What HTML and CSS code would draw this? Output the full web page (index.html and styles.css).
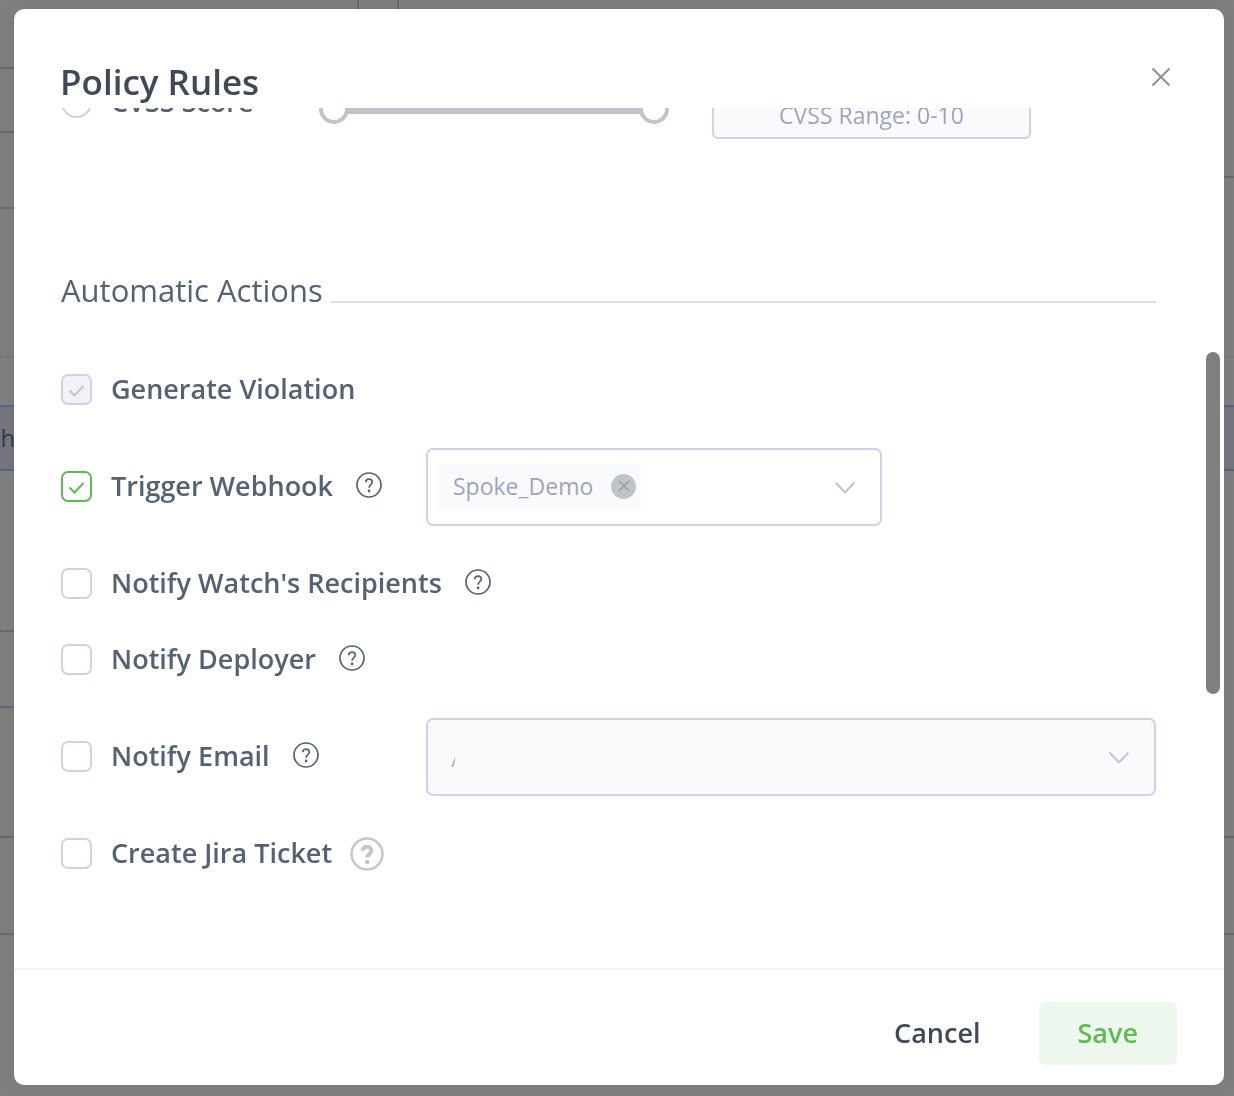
FILE: index.html
```
<!DOCTYPE html>
<html lang="en">
<head>
<meta charset="utf-8">
<meta name="viewport" content="width=device-width, initial-scale=1">
<title>Policy Rules</title>
<link rel="stylesheet" href="styles.css">
</head>
<body>
<svg class="sprite" aria-hidden="true">
  <symbol id="check" viewBox="0 0 31 31"><path d="M8.500 16.500 13.500 21.500 22.500 12"/></symbol>
  <symbol id="help" viewBox="0 0 26 26"><circle cx="13" cy="13" r="12"/><path d="M9.700 10.200C9.800 8.200 11.100 7.100 13 7.100s3.300 1.200 3.300 3c0 2.600-3.200 2.700-3.200 5.600"/><circle class="dot" cx="13.100" cy="19" r="1.400"/></symbol>
  <symbol id="help-bold" viewBox="0 0 34 34"><circle cx="17" cy="17" r="15.500"/><path class="heavy" d="M12.600 13.600C12.800 11 14.500 9.800 17 9.800s4.400 1.400 4.400 3.800c0 3.200-4.200 3.300-4.200 6.800"/><circle class="dot" cx="17.200" cy="25" r="2.200"/></symbol>
  <symbol id="chevron" viewBox="0 0 22 14"><path d="M1.500 1.500 11 11.500 20.500 1.500"/></symbol>
  <symbol id="cross" viewBox="0 0 20 20"><path d="M1.500 1.500 18.500 18.500M18.500 1.500 1.500 18.500"/></symbol>
</svg>

<div class="page" aria-hidden="true">
  <div class="side">
    <div class="cell h69"></div>
    <div class="cell h64"></div>
    <div class="cell h76"></div>
    <div class="cell faint h149"></div>
    <div class="cell plain h47"></div>
    <div class="cell picked h66">th</div>
    <div class="cell h161"></div>
    <div class="cell h76"></div>
    <div class="cell grey h130"></div>
    <div class="cell grey h97"></div>
  </div>
  <div class="tab"></div>
  <div class="main">
    <div class="cell grey h178"></div>
    <div class="cell faint h180"></div>
    <div class="cell plain h47"></div>
    <div class="cell picked h66"></div>
    <div class="cell grey h367"></div>
    <div class="cell grey h97"></div>
  </div>
</div>

<div class="overlay">
  <section class="modal" role="dialog" aria-modal="true" aria-labelledby="title">
    <header class="modal-header">
      <h1 id="title">Policy Rules</h1>
      <button class="close" type="button" aria-label="Close"><svg><use href="#cross"/></svg></button>
    </header>

    <div class="modal-body">
      <div class="content">
        <div class="criteria">
          <input class="radio" type="radio" id="cvss" name="criteria">
          <label class="label" for="cvss">CVSS Score</label>
          <div class="range">
            <input type="range" min="0" max="10" value="0" aria-label="Minimum score">
            <input type="range" min="0" max="10" value="10" aria-label="Maximum score">
          </div>
          <input class="readout" type="text" value="CVSS Range: 0-10" aria-label="CVSS range" readonly>
        </div>

        <h2>Automatic Actions</h2>

        <div class="row">
          <span class="box"><input type="checkbox" id="violation" checked disabled><svg><use href="#check"/></svg></span>
          <label class="label" for="violation">Generate Violation</label>
        </div>
        <div class="row with-field">
          <div class="option">
            <span class="box"><input type="checkbox" id="webhook" checked><svg><use href="#check"/></svg></span>
            <label class="label" for="webhook">Trigger Webhook</label>
            <svg class="help"><use href="#help"/></svg>
          </div>
          <div class="field webhook">
            <span class="chip">Spoke_Demo<button class="remove" type="button" aria-label="Remove Spoke_Demo"><svg><use href="#cross"/></svg></button></span>
            <button class="toggle" type="button" aria-label="Choose webhooks"><svg><use href="#chevron"/></svg></button>
          </div>
        </div>
        <div class="row">
          <span class="box"><input type="checkbox" id="recipients"><svg><use href="#check"/></svg></span>
          <label class="label" for="recipients">Notify Watch's Recipients</label>
          <svg class="help"><use href="#help"/></svg>
        </div>
        <div class="row">
          <span class="box"><input type="checkbox" id="deployer"><svg><use href="#check"/></svg></span>
          <label class="label" for="deployer">Notify Deployer</label>
          <svg class="help"><use href="#help"/></svg>
        </div>
        <div class="row with-field">
          <div class="option">
            <span class="box"><input type="checkbox" id="email"><svg><use href="#check"/></svg></span>
            <label class="label" for="email">Notify Email</label>
            <svg class="help"><use href="#help"/></svg>
          </div>
          <div class="field disabled">
            <input class="search" type="text" placeholder="A" aria-label="Email recipients" disabled>
            <button class="toggle" type="button" aria-label="Choose recipients" disabled><svg><use href="#chevron"/></svg></button>
          </div>
        </div>
        <div class="row">
          <span class="box"><input type="checkbox" id="jira"><svg><use href="#check"/></svg></span>
          <label class="label" for="jira">Create Jira Ticket</label>
          <svg class="help muted"><use href="#help-bold"/></svg>
        </div>
      </div>
      <div class="thumb"></div>
    </div>

    <footer class="modal-footer">
      <button class="cancel" type="button">Cancel</button>
      <button class="save" type="button">Save</button>
    </footer>
  </section>
</div>
</body>
</html>
```
FILE: styles.css
```
* { box-sizing: border-box; }

body {
  margin: 0;
  min-height: 100vh;
  background: #7f7f7f;
  color: #556274;
  font-family: "Open Sans", "Noto Sans", sans-serif;
}

button, input { font: inherit; color: inherit; margin: 0; }
button { padding: 0; border: 0; background: none; cursor: pointer; }
svg { fill: none; stroke: currentColor; stroke-width: 2; display: block; }
.sprite { display: none; }

/* Page behind the dialog */
.page { display: flex; height: 100vh; overflow: hidden; }
.side { width: 357px; }
.tab {
  width: 42px;
  height: 69px;
  border: 2px solid #656979;
  border-top: 0;
}
.main { flex: 1; }
.cell { border-bottom: 2px solid #656979; }
.faint { border-color: #797979; }
.grey { border-color: #6a6a6c; }
.plain { border: 0; }
.picked {
  background: #74767e;
  border-top: 2px solid #5c6382;
  border-bottom-color: #5c6382;
  color: #343a44;
  font-size: 24px;
  line-height: 62px;
  text-indent: -8px;
}
.h47 { height: 47px; }
.h64 { height: 64px; }
.h66 { height: 66px; }
.h69 { height: 69px; }
.h76 { height: 76px; }
.h97 { height: 97px; }
.h130 { height: 130px; }
.h149 { height: 149px; }
.h161 { height: 161px; }
.h178 { height: 178px; }
.h180 { height: 180px; }
.h367 { height: 367px; }

/* Dialog */
.overlay {
  position: fixed;
  inset: 0;
  display: flex;
  padding: 9px 10px 11px 14px;
}
.modal {
  flex: 1;
  min-width: 0;
  display: flex;
  flex-direction: column;
  background: #fff;
  border-radius: 10px;
  box-shadow: 0 0 20px rgba(0, 0, 0, .06);
}
.modal-header {
  display: flex;
  justify-content: space-between;
  align-items: flex-start;
  padding: 49px 53px 2px 46px;
}
h1 {
  margin: 0;
  color: #414857;
  font-size: 35px;
  font-weight: 600;
  line-height: 48px;
}
.close { margin-top: 9px; color: #919191; }
.close svg { width: 20px; height: 20px; }

.modal-body {
  flex: 1;
  min-height: 0;
  position: relative;
  overflow: hidden;
}
/* The list is scrolled part of the way down */
.content {
  display: flex;
  flex-direction: column;
  gap: 40px;
  margin-top: -21px;
  padding: 0 68px 0 47px;
}
.thumb {
  position: absolute;
  top: 244px;
  right: 4px;
  width: 14px;
  height: 342px;
  border-radius: 7px;
  background: #7f7f7f;
}

.label {
  padding-bottom: 2px;
  font-size: 27px;
  font-weight: 600;
  line-height: 34px;
  white-space: nowrap;
}

.criteria {
  display: grid;
  grid-template-columns: 31px 188px 350px 319px;
  align-items: start;
  height: 52px;
}
.criteria .label { margin-left: 19px; line-height: 30px; }
.radio {
  appearance: none;
  width: 31px;
  height: 31px;
  border: 2px solid #cdd2e6;
  border-radius: 50%;
}
.range {
  display: grid;
  margin: 7px 0 0 39px;
  width: 350px;
  background: linear-gradient(#bfc4cb, #bfc4cb) center / 300px 10px no-repeat;
}
.range input {
  grid-area: 1 / 1;
  appearance: none;
  width: 100%;
  height: 30px;
  background: none;
  pointer-events: none;
}
.range input::-webkit-slider-thumb {
  appearance: none;
  width: 30px;
  height: 30px;
  border: 4px solid #bfc4cb;
  border-radius: 50%;
  background: #fff;
  pointer-events: auto;
}
.readout {
  margin: 4px 0 0 82px;
  width: 319px;
  height: 48px;
  padding: 0;
  border: 2px solid #cdd2e6;
  border-radius: 6px;
  background: #f9fafc;
  color: #a0a3bd;
  font-size: 23px;
  text-align: center;
}

h2 {
  display: flex;
  gap: 8px;
  margin: 90px 0 21px;
  font-size: 31px;
  font-weight: 400;
  line-height: 42px;
}
h2::after {
  content: "";
  flex: 1;
  height: 2px;
  margin-top: 32px;
  background: #dcdddf;
}

.row, .option { display: flex; align-items: center; }
.row { height: 36px; }
.row.with-field { height: 78px; }
.option { width: 365px; }

.box { display: grid; margin: 0 19px 2px 0; }
.box > * { grid-area: 1 / 1; width: 31px; height: 31px; }
.box input {
  appearance: none;
  border: 2px solid #cdd2e6;
  border-radius: 7px;
  background: #fff;
}
.box svg { pointer-events: none; visibility: hidden; color: #5fbb50; }
.box input:checked { border-color: #5fbb50; }
.box input:checked + svg { visibility: visible; }
.box input:disabled { border-color: #cdd2e6; background: #f1f2f7; }
.box input:disabled + svg { color: #c4c5c9; }

.help { width: 26px; height: 26px; margin: 0 0 5px 23px; stroke-width: 1.7; }
.dot { fill: currentColor; stroke: none; }
.heavy { stroke-width: 4; }
.help.muted { width: 34px; height: 34px; margin: 0 0 0 18px; color: #c6c6c6; stroke-width: 2.5; }

.field {
  flex: 1;
  display: flex;
  align-items: center;
  justify-content: space-between;
  height: 78px;
  padding: 0 24px 0 9px;
  border: 2px solid #cdd2e6;
  border-radius: 7px;
}
.field.webhook { flex: 0 1 456px; }
.field.disabled { background: #f9fafc; }
.chip {
  display: flex;
  align-items: center;
  gap: 18px;
  height: 46px;
  padding: 0 5px 2px 16px;
  background: #f9fafc;
  color: #a0a3bd;
  font-size: 23px;
}
.remove {
  display: grid;
  place-items: center;
  width: 25px;
  height: 25px;
  border-radius: 50%;
  background: #bfc4cb;
  color: #92969c;
}
.remove svg { width: 12px; height: 12px; }
.remove use { stroke-width: 2; }
.toggle { margin-top: 2px; color: #c4c6ca; }
.toggle svg { width: 22px; height: 14px; }
.search {
  width: 4px;
  height: 34px;
  margin-left: 14px;
  padding: 0;
  border: 0;
  background: none;
  font-size: 24px;
}
.search::placeholder { color: #b4b6ba; opacity: 1; }

.modal-footer {
  display: flex;
  justify-content: flex-end;
  gap: 19px;
  padding: 32px 47px 20px;
  border-top: 2px solid #f1f1f2;
}
.modal-footer button {
  height: 63px;
  padding: 0 39px 3px;
  border-radius: 7px;
  font-size: 27px;
  font-weight: 600;
}
.cancel { color: #414857; }
.save { background: #eef7ee; color: #5fbb50; }
```
